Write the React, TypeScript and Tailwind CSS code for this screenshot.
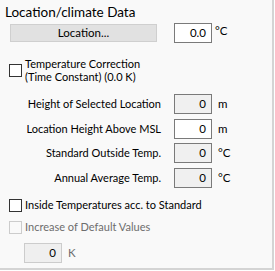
import React from "react";

const font = { fontFamily: 'Lato, "Liberation Sans", Arial, sans-serif' };

function Field({ value, disabled, white }: { value: string; disabled?: boolean; white?: boolean }) {
  return (
    <div
      className={
        "w-[38px] h-[20px] flex items-center justify-end pr-[5px] text-[11.5px] border " +
        (white ? "bg-white border-[#7a7a7a] text-black" : disabled ? "bg-[#efefef] border-[#cccccc] text-black" : "bg-[#f0f0f0] border-[#7a7a7a] text-black")
      }
    >
      {value}
    </div>
  );
}

function Row({ label, unit, white }: { label: string; unit: string; white?: boolean }) {
  return (
    <div className="flex items-center h-[20px]">
      <div className="w-[161px] text-right text-[11px] leading-[14px] text-black">{label}</div>
      <div className="ml-[13px]">
        <Field value="0" white={white} />
      </div>
      <div className="ml-[6px] text-[11.5px] text-black">{unit}</div>
    </div>
  );
}

export default function App() {
  return (
    <div className="w-[275px] h-[271px] bg-white" style={font}>
      <div className="w-[274px] h-[270px] bg-[#f9f9f9] border-r-2 border-b-2 border-[#d4d4d4] relative">
        <div className="pt-[4px] pl-[5px] h-[20px] text-[13.5px] leading-[16px] text-black">Location/climate Data</div>
        <div className="flex items-center mt-[3px] h-[20px]">
          <div className="ml-[10px] w-[147px] h-[18px] bg-[#e1e1e1] border border-[#cfcfcf] flex items-center justify-center text-[11.5px] text-black">
            Location...
          </div>
          <div className="ml-[17px]">
            <Field value="0.0" white />
          </div>
          <div className="ml-[3px] text-[11.5px] text-black self-start -mt-[1px]">°C</div>
        </div>
        <div className="flex items-center mt-[14px] ml-[9px]">
          <div className="w-[13px] h-[13px] border border-[#333333] bg-white shrink-0" />
          <div className="ml-[3px] text-[11px] leading-[13px] text-black">
            Temperature Correction
            <br />
            (Time Constant) (0.0 K)
          </div>
        </div>
        <div className="flex flex-col gap-[4.5px] mt-[11px]">
          <Row label="Height of Selected Location" unit="m" />
          <Row label="Location Height Above MSL" unit="m" white />
          <Row label="Standard Outside Temp." unit="°C" />
          <Row label="Annual Average Temp." unit="°C" />
        </div>
        <div className="flex items-center mt-[11px] ml-[9px] h-[13px]">
          <div className="w-[13px] h-[13px] border border-[#333333] bg-white shrink-0" />
          <div className="ml-[3px] text-[11px] text-black">Inside Temperatures acc. to Standard</div>
        </div>
        <div className="flex items-center mt-[9px] ml-[9px] h-[13px]">
          <div className="w-[13px] h-[13px] border border-[#cccccc] bg-[#f9f9f9] shrink-0" />
          <div className="ml-[3px] text-[11px] text-[#6d6d6d]">Increase of Default Values</div>
        </div>
        <div className="flex items-center mt-[9px] ml-[24px] h-[20px]">
          <Field value="0" disabled />
          <div className="ml-[6px] text-[11.5px] text-[#6d6d6d]">K</div>
        </div>
      </div>
    </div>
  );
}
